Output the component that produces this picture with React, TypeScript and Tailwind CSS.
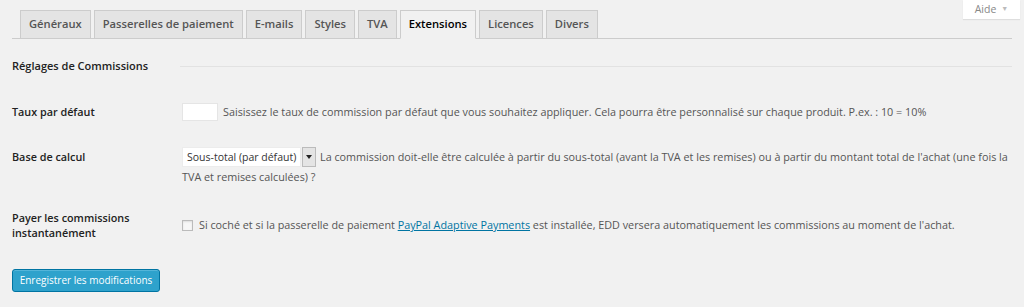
import React from 'react'

const tabs = ['Généraux', 'Passerelles de paiement', 'E-mails', 'Styles', 'TVA', 'Extensions', 'Licences', 'Divers']

export default function App() {
  const active = 'Extensions'

  return (
    <div
      className="relative w-[1024px] h-[307px] bg-[#f1f1f1] text-[#555] text-[10.8px] overflow-hidden"
      style={{ fontFamily: '"Open Sans", "Noto Sans", sans-serif' }}
    >
      {/* help tab */}
      <div className="absolute right-[4px] top-0 w-[57px] h-[19px] bg-white shadow-[0_1px_1px_rgba(0,0,0,0.08)] flex items-center justify-center gap-[5px] text-[10.5px] text-[#888]">
        <span>Aide</span>
        <span className="text-[7px] text-[#bbb]">▼</span>
      </div>

      <div className="px-[12px] pt-[10px]">
        {/* tabs */}
        <div className="flex items-end gap-[3px] pl-[8px] border-b border-[#ccc] h-[29px]">
          {tabs.map((t) => (
            <div
              key={t}
              className={
                t === active
                  ? 'h-[29px] -mb-px px-[8px] flex items-center bg-[#f1f1f1] border border-[#ccc] border-b-[#f1f1f1] text-[#000] text-[11.2px] font-semibold whitespace-nowrap'
                  : 'h-[28px] px-[8px] flex items-center bg-[#e4e4e4] border border-[#ccc] border-b-0 text-[#555] text-[11.2px] font-semibold whitespace-nowrap'
              }
            >
              {t}
            </div>
          ))}
        </div>

        {/* section heading */}
        <div className="flex items-center h-[20px] mt-[17px]">
          <div className="w-[168px] font-semibold text-[#222] text-[11px] whitespace-nowrap">Réglages de Commissions</div>
          <div className="flex-1 border-t border-[#e2e2e2]"></div>
        </div>

        {/* rows */}
        <div className="flex mt-[27px] items-center h-[18px]">
          <div className="w-[170px] font-semibold text-[#222]">Taux par défaut</div>
          <div className="flex items-center gap-[5px]">
            <div className="w-[36px] h-[18px] bg-white border border-[#e5e5e5]"></div>
            <span className="whitespace-nowrap">
              Saisissez le taux de commission par défaut que vous souhaitez appliquer. Cela pourra être personnalisé sur chaque produit. P.ex. : 10 = 10%
            </span>
          </div>
        </div>

        <div className="flex mt-[26px] items-start">
          <div className="w-[170px] pt-[1px] font-semibold text-[#222] leading-[18px]">Base de calcul</div>
          <div className="flex-1 leading-[18px]">
            <span className="inline-flex align-middle h-[20px] mr-[4px]">
              <span className="h-[20px] w-[119px] bg-white border border-[#ececec] flex items-center pl-[4px] text-[#333] text-[10.5px] whitespace-nowrap overflow-hidden">
                Sous-total (par défaut)
              </span>
              <span className="h-[20px] w-[14px] ml-[1px] bg-[#e4e4e4] border border-[#bbb] flex items-center justify-center">
                <svg width="6" height="4" viewBox="0 0 6 4">
                  <path d="M0 0 L6 0 L3 4 Z" fill="#222" />
                </svg>
              </span>
            </span>
            <span className="align-middle">
              La commission doit-elle être calculée à partir du sous-total (avant la TVA et les remises) ou à partir du montant total de l'achat (une fois la TVA et remises calculées) ?
            </span>
          </div>
        </div>

        <div className="flex mt-[24px] items-center">
          <div className="w-[170px] font-semibold text-[#222] leading-[15px]">
            Payer les commissions
            <br />
            instantanément
          </div>
          <div className="flex items-center gap-[6px]">
            <div className="w-[11px] h-[11px] bg-[#f7f7f7] border border-[#bbb] shadow-[inset_0_1px_2px_rgba(0,0,0,0.1)]"></div>
            <span className="whitespace-nowrap">
              Si coché et si la passerelle de paiement{' '}
              <a className="text-[#0074a2] underline">PayPal Adaptive Payments</a> est installée, EDD versera automatiquement les
              commissions au moment de l'achat.
            </span>
          </div>
        </div>

        <button className="mt-[29px] h-[23px] w-[148px] rounded-[3px] bg-[#2ea2cc] border border-[#0074a2] text-white text-[10px] whitespace-nowrap shadow-[inset_0_1px_0_rgba(120,200,230,0.5)]">
          Enregistrer les modifications
        </button>
      </div>
    </div>
  )
}
